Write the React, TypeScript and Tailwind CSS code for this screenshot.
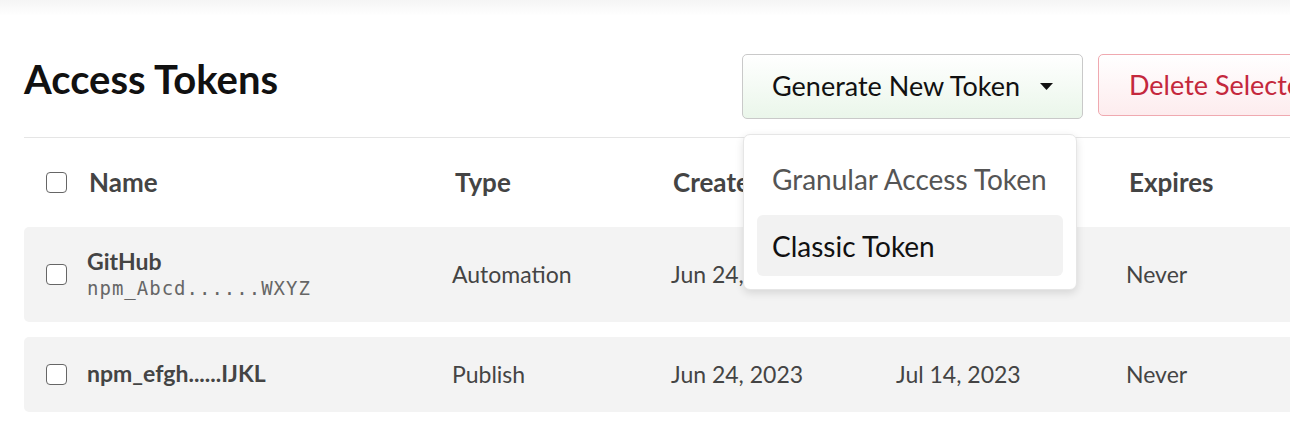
import { useState } from "react";

type Token = {
  id: string;
  name: string;
  key?: string;
  type: string;
  created: string;
  lastUsed: string;
  expires: string;
};

const TOKENS: Token[] = [
  { id: "1", name: "GitHub", key: "npm_Abcd......WXYZ", type: "Automation", created: "Jun 24, 2023", lastUsed: "Jul 12, 2023", expires: "Never" },
  { id: "2", name: "npm_efgh......IJKL", type: "Publish", created: "Jun 24, 2023", lastUsed: "Jul 14, 2023", expires: "Never" },
];

function Checkbox() {
  return <span className="block w-[21px] h-[21px] rounded-[4px] border-[1.5px] border-[#666] bg-white" />;
}

function Caret() {
  return (
    <svg width="13" height="7" viewBox="0 0 13 7" className="block">
      <path d="M0 0 L13 0 L6.5 7 Z" fill="#111" />
    </svg>
  );
}

export default function App() {
  const [open] = useState(true);

  return (
    <div className="w-[1290px] h-[432px] overflow-hidden bg-white font-['Lato',sans-serif]">
      {/* ── faint header shadow ── */}
      <div className="h-[16px] bg-gradient-to-b from-[#f5f5f5] to-white" />

      <div className="w-[1400px] pl-[24px]">
        {/* ── Title + actions ── */}
        <div className="flex items-start mt-[38px]">
          <h1 className="w-[718px] text-[40px] leading-[50px] font-bold text-[#111]">Access Tokens</h1>

          <div className="relative">
            <button className="flex items-center h-[65px] w-[341px] pl-[29px] pr-[29px] rounded-[5px] border border-[#c9c9c9] bg-gradient-to-b from-white to-[#eaf6ea] text-[27px] text-[#111]">
              <span>Generate New Token</span>
              <span className="ml-auto"><Caret /></span>
            </button>

            {open && (
              <div className="absolute left-[1px] top-[80px] z-10 w-[334px] p-[13px] flex flex-col gap-[6px] bg-white border border-[#e6e6e6] rounded-[7px] shadow-[0_3px_8px_rgba(0,0,0,0.12)]">
                <div className="h-[61px] flex items-center pl-[15px] rounded-[6px] text-[28px] text-[#555]">Granular Access Token</div>
                <div className="h-[61px] flex items-center pl-[15px] rounded-[6px] bg-[#f2f2f2] text-[28px] text-[#111]">Classic Token</div>
              </div>
            )}
          </div>

          <button className="ml-[15px] h-[62px] w-[260px] pl-[30px] text-left rounded-[5px] border border-[#f0a9b0] bg-gradient-to-b from-white to-[#fdecee] text-[27px] text-[#c4283c] whitespace-nowrap">
            Delete Selected
          </button>
        </div>

        {/* ── Table ── */}
        <div className="mt-[18px] border-t border-[#e5e5e5]">
          <div className="h-[89px] pl-[22px] grid grid-cols-[43px_366px_218px_225px_231px_1fr] items-center text-[26px] font-bold text-[#444]">
            <Checkbox />
            <span>Name</span>
            <span>Type</span>
            <span>Created</span>
            <span>Last Used</span>
            <span>Expires</span>
          </div>

          <div className="flex flex-col gap-[15px]">
            {TOKENS.map((t) => (
              <div key={t.id} className="py-[24px] pl-[22px] rounded-[5px] bg-[#f3f3f3] grid grid-cols-[41px_365px_219px_225px_230px_1fr] items-center text-[23px] leading-[27px] text-[#444]">
                <Checkbox />
                <div>
                  <div className="font-bold -mt-[3px]">{t.name}</div>
                  {t.key && (
                    <div className="mt-[3px] font-['DejaVu_Sans_Mono',monospace] text-[19px] leading-[20px] tracking-[1px] text-[#666]">{t.key}</div>
                  )}
                </div>
                <span>{t.type}</span>
                <span>{t.created}</span>
                <span>{t.lastUsed}</span>
                <span>{t.expires}</span>
              </div>
            ))}
          </div>
        </div>
      </div>
    </div>
  );
}
